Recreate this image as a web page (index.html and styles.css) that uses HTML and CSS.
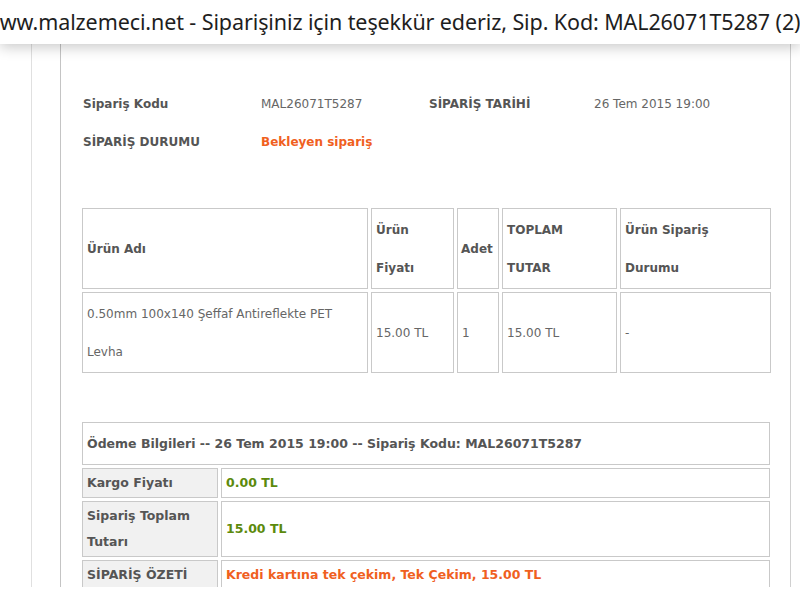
FILE: index.html
```html
<!DOCTYPE html>
<html lang="tr">

<head>
    <meta charset="UTF-8">
    <title>Siparişiniz için teşekkür ederiz</title>
    <link rel="stylesheet" href="styles.css">
</head>

<body>
    <div class="titlebar">
        <span class="title">www.malzemeci.net - Siparişiniz için teşekkür ederiz, Sip. Kod: MAL26071T5287 (2)</span>
    </div>

    <div class="page">
        <div class="panel">
            <div class="order-info">
                <div class="label">Sipariş Kodu</div>
                <div class="value">MAL26071T5287</div>
                <div class="label">SİPARİŞ TARİHİ</div>
                <div class="value">26 Tem 2015 19:00</div>
                <div class="label">SİPARİŞ DURUMU</div>
                <div class="value status">Bekleyen sipariş</div>
            </div>

            <table class="items">
                <tr>
                    <th class="col-name">Ürün Adı</th>
                    <th class="col-price">Ürün<br>Fiyatı</th>
                    <th class="col-qty">Adet</th>
                    <th class="col-total">TOPLAM<br>TUTAR</th>
                    <th class="col-state">Ürün Sipariş<br>Durumu</th>
                </tr>
                <tr>
                    <td>0.50mm 100x140 Şeffaf Antireflekte PET<br>Levha</td>
                    <td>15.00 TL</td>
                    <td>1</td>
                    <td>15.00 TL</td>
                    <td>-</td>
                </tr>
            </table>

            <table class="payment">
                <colgroup>
                    <col class="key-col">
                    <col>
                </colgroup>
                <tr>
                    <th colspan="2" class="caption">Ödeme Bilgileri -- 26 Tem 2015 19:00 -- Sipariş Kodu: MAL26071T5287</th>
                </tr>
                <tr>
                    <th class="key">Kargo Fiyatı</th>
                    <td class="amount">0.00 TL</td>
                </tr>
                <tr>
                    <th class="key">Sipariş Toplam<br>Tutarı</th>
                    <td class="amount">15.00 TL</td>
                </tr>
                <tr>
                    <th class="key">SİPARİŞ ÖZETİ</th>
                    <td class="summary">Kredi kartına tek çekim, Tek Çekim, 15.00 TL</td>
                </tr>
            </table>
        </div>
    </div>
</body>

</html>
```

FILE: styles.css
```css
body {
    margin: 0;
    background-color: #fff;
    font-family: "DejaVu Sans", Verdana, sans-serif;
    font-size: 12px;
    color: #666;
}

.titlebar {
    position: relative;
    z-index: 1;
    height: 44px;
    background-color: #fff;
    overflow: hidden;
    white-space: nowrap;
    box-shadow: 0 3px 14px rgba(0, 0, 0, 0.22);
}

.title {
    display: block;
    margin-left: -17px;
    font-family: "Noto Sans", "Open Sans", sans-serif;
    font-size: 21.5px;
    letter-spacing: -0.1px;
    line-height: 44px;
    color: #1e1e1e;
}

.page {
    height: 543px;
    margin-left: 31px;
    padding-left: 28px;
    border-left: 1px solid #e0e0e0;
    overflow: hidden;
}

.panel {
    width: 731px;
    height: 100%;
    box-sizing: border-box;
    padding-left: 18px;
    border-left: 1px solid #c4c4c4;
    border-right: 1px solid #d0d0d0;
    overflow: hidden;
}

.order-info {
    display: grid;
    grid-template-columns: 178px 168px 165px auto;
    margin-top: 41px;
    padding-left: 4px;
    line-height: 38px;
}

.order-info .label {
    font-weight: bold;
    color: #555;
}

.order-info .status {
    font-weight: bold;
    color: #f0601e;
}

table {
    width: 694px;
    table-layout: fixed;
    border-collapse: separate;
    border-spacing: 3px;
}

th,
td {
    box-sizing: border-box;
    border: 1px solid #c9c9c9;
    text-align: left;
    vertical-align: middle;
}

th {
    color: #555;
}

.items {
    margin-top: 44px;
}

.items th,
.items td {
    padding: 2px 4px 1px;
    line-height: 38px;
}

.items .col-name { width: 286px; }
.items .col-price { width: 83px; }
.items .col-qty { width: 42px; padding-left: 3px; padding-right: 0; }
.items .col-total { width: 115px; }
.items .col-state { width: 151px; }

.payment {
    margin-top: 43px;
    font-size: 12.5px;
}

.payment .key-col {
    width: 136px;
}

.payment th,
.payment td {
    padding: 1px 4px;
    line-height: 26px;
}

.payment .caption {
    padding: 8px 4px;
    line-height: 25px;
}

.payment .key {
    background-color: #f1f1f1;
}

.payment .amount {
    font-weight: bold;
    color: #5c8a0c;
}

.payment .summary {
    font-weight: bold;
    color: #f0601e;
}
```
